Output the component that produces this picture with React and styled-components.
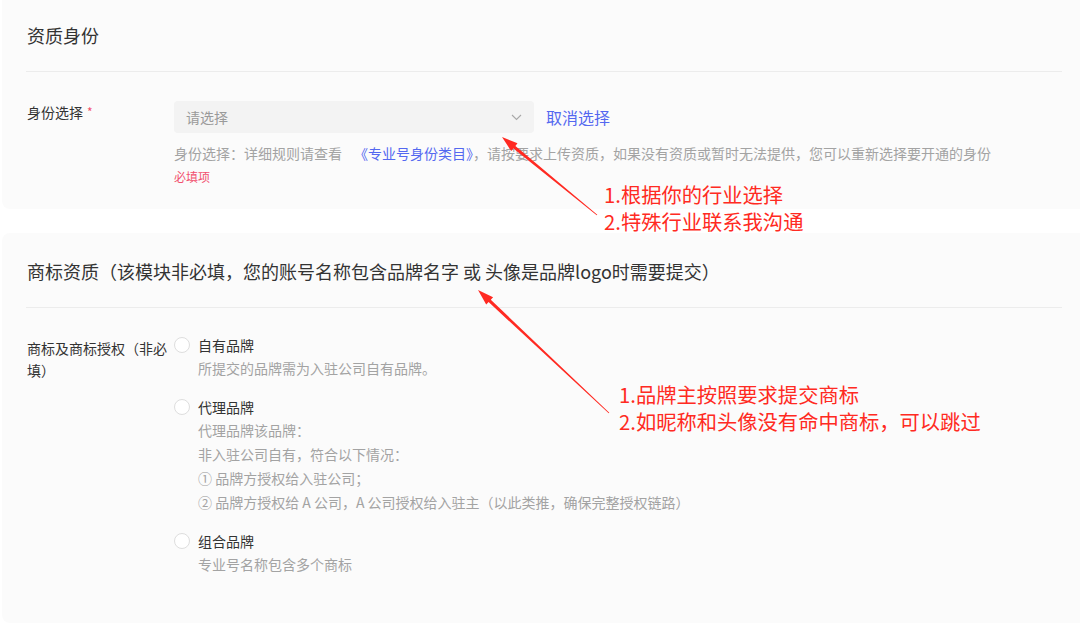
import React from "react";
import styled, { createGlobalStyle } from "styled-components";

const GlobalStyle = createGlobalStyle`
  html, body {
    margin: 0;
    padding: 0;
    background: #fff;
    overflow: hidden;
  }
  body {
    font-family: "Noto Sans CJK SC", "Noto Sans", sans-serif;
    color: #333;
  }
`;

const Page = styled.div`
  position: relative;
  width: 1080px;
  height: 633px;
  overflow: hidden;
`;

const Stack = styled.div`
  display: flex;
  flex-direction: column;
  gap: 24px;
  padding-left: 2px;
  width: 1084px;
`;

const Card = styled.section`
  background: #fbfbfb;
  border-radius: ${(p) => (p.$cutTop ? "0 0 8px 8px" : "8px")};
  padding: 0 24px ${(p) => p.$bottom}px;
`;

const Title = styled.h2`
  margin: 0;
  padding: ${(p) => p.$top}px 0 25px 1px;
  font-size: 18px;
  font-weight: 400;
  line-height: 22px;
  color: #333;
  border-bottom: 1px solid #ececec;
`;

const FormRow = styled.div`
  display: flex;
  align-items: flex-start;
  padding-top: ${(p) => p.$top}px;
`;

const Label = styled.div`
  width: 148px;
  flex: none;
  padding-left: 1px;
  padding-top: ${(p) => p.$offset || 0}px;
  font-size: 14px;
  line-height: 22px;
  color: #333;
  box-sizing: border-box;
  padding-right: 6px;
`;

const Star = styled.span`
  color: #f2506e;
  font-size: 12px;
  margin-left: 4px;
  vertical-align: top;
`;

const Field = styled.div`
  flex: 1;
  min-width: 0;
`;

const SelectLine = styled.div`
  display: flex;
  align-items: center;
  gap: 12px;
`;

const SelectBox = styled.div`
  width: 360px;
  height: 32px;
  box-sizing: border-box;
  background: #f3f3f3;
  border-radius: 4px;
  display: flex;
  align-items: center;
  justify-content: space-between;
  padding: 0 12px;
`;

const Placeholder = styled.span`
  font-size: 14px;
  color: #9a9a9a;
`;

const LinkText = styled.span`
  color: #5468f0;
  margin-left: ${(p) => p.$gap || 0}px;
`;

const Help = styled.div`
  margin-top: 8px;
  font-size: 14px;
  line-height: 24px;
  color: #a3a3a3;
  white-space: nowrap;
`;

const Required = styled.div`
  margin-top: 2px;
  font-size: 12px;
  line-height: 20px;
  color: #f2506e;
`;

const Options = styled.div`
  display: flex;
  flex-direction: column;
  gap: 16px;
`;

const Option = styled.div`
  display: grid;
  grid-template-columns: 16px 1fr;
  column-gap: 8px;
`;

const Radio = styled.span`
  width: 16px;
  height: 16px;
  box-sizing: border-box;
  border: 1px solid #dedede;
  border-radius: 50%;
  background: #fff;
  margin-top: 3px;
`;

const OptionTitle = styled.div`
  font-size: 14px;
  line-height: 22px;
  color: #333;
`;

const Desc = styled.div`
  grid-column: 2;
  font-size: 14px;
  line-height: 24px;
  color: #a3a3a3;
  white-space: nowrap;
`;

const Note = styled.div`
  position: absolute;
  left: ${(p) => p.$x}px;
  top: ${(p) => p.$y}px;
  display: flex;
  flex-direction: column;
  gap: 2px;
  color: #ff2a22;
  white-space: nowrap;
`;

const NoteLine = styled.div`
  font-size: 20.3px;
  line-height: 25px;
`;

const Overlay = styled.svg`
  position: absolute;
  left: 0;
  top: 0;
  pointer-events: none;
`;

function arrowPoints(tx, ty, px, py) {
  const len = Math.hypot(px - tx, py - ty);
  const dx = (px - tx) / len;
  const dy = (py - ty) / len;
  const nx = -dy;
  const ny = dx;
  const bx = px - dx * 16;
  const by = py - dy * 16;
  const pts = [
    [tx + nx * 0.4, ty + ny * 0.4],
    [bx + nx * 1.6, by + ny * 1.6],
    [bx + nx * 5, by + ny * 5],
    [px, py],
    [bx - nx * 5, by - ny * 5],
    [bx - nx * 1.6, by - ny * 1.6],
    [tx - nx * 0.4, ty - ny * 0.4],
  ];
  return pts.map((p) => p.map((v) => v.toFixed(1)).join(",")).join(" ");
}

const Chevron = () => (
  <svg width="11" height="7" viewBox="0 0 11 7">
    <polyline points="1,1 5.5,5.5 10,1" fill="none" stroke="#a8a8a8" strokeWidth="1.1" />
  </svg>
);

const brandOptions = [
  { title: "自有品牌", desc: ["所提交的品牌需为入驻公司自有品牌。"] },
  {
    title: "代理品牌",
    desc: [
      "代理品牌该品牌：",
      "非入驻公司自有，符合以下情况：",
      "① 品牌方授权给入驻公司；",
      "② 品牌方授权给 A 公司，A 公司授权给入驻主（以此类推，确保完整授权链路）",
    ],
  },
  { title: "组合品牌", desc: ["专业号名称包含多个商标"] },
];

export default function App() {
  return (
    <Page>
      <GlobalStyle />
      <Stack>
        <Card $cutTop $bottom={22}>
          <Title $top={24}>资质身份</Title>
          <FormRow $top={29}>
            <Label>
              身份选择<Star>*</Star>
            </Label>
            <Field>
              <SelectLine>
                <SelectBox>
                  <Placeholder>请选择</Placeholder>
                  <Chevron />
                </SelectBox>
                <LinkText>取消选择</LinkText>
              </SelectLine>
              <Help>
                身份选择：详细规则请查看<LinkText $gap={12}>《专业号身份类目》</LinkText>，请按要求上传资质，如果没有资质或暂时无法提供，您可以重新选择要开通的身份
              </Help>
              <Required>必填项</Required>
            </Field>
          </FormRow>
        </Card>

        <Card $bottom={47}>
          <Title $top={27}>
            商标资质（该模块非必填，您的账号名称包含品牌名字 或 头像是品牌logo时需要提交）
          </Title>
          <FormRow $top={26}>
            <Label $offset={3}>商标及商标授权（非必填）</Label>
            <Options>
              {brandOptions.map((o) => (
                <Option key={o.title}>
                  <Radio />
                  <OptionTitle>{o.title}</OptionTitle>
                  {o.desc.map((d) => (
                    <Desc key={d}>{d}</Desc>
                  ))}
                </Option>
              ))}
            </Options>
          </FormRow>
        </Card>
      </Stack>

      <Overlay width="1080" height="633" viewBox="0 0 1080 633">
        <polygon points={arrowPoints(597, 215, 502, 137)} fill="#ff2a22" />
        <polygon points={arrowPoints(609, 413, 478, 290)} fill="#ff2a22" />
      </Overlay>
      <Note $x={604} $y={182}>
        <NoteLine>1.根据你的行业选择</NoteLine>
        <NoteLine>2.特殊行业联系我沟通</NoteLine>
      </Note>
      <Note $x={619} $y={382}>
        <NoteLine>1.品牌主按照要求提交商标</NoteLine>
        <NoteLine>2.如昵称和头像没有命中商标，可以跳过</NoteLine>
      </Note>
    </Page>
  );
}
